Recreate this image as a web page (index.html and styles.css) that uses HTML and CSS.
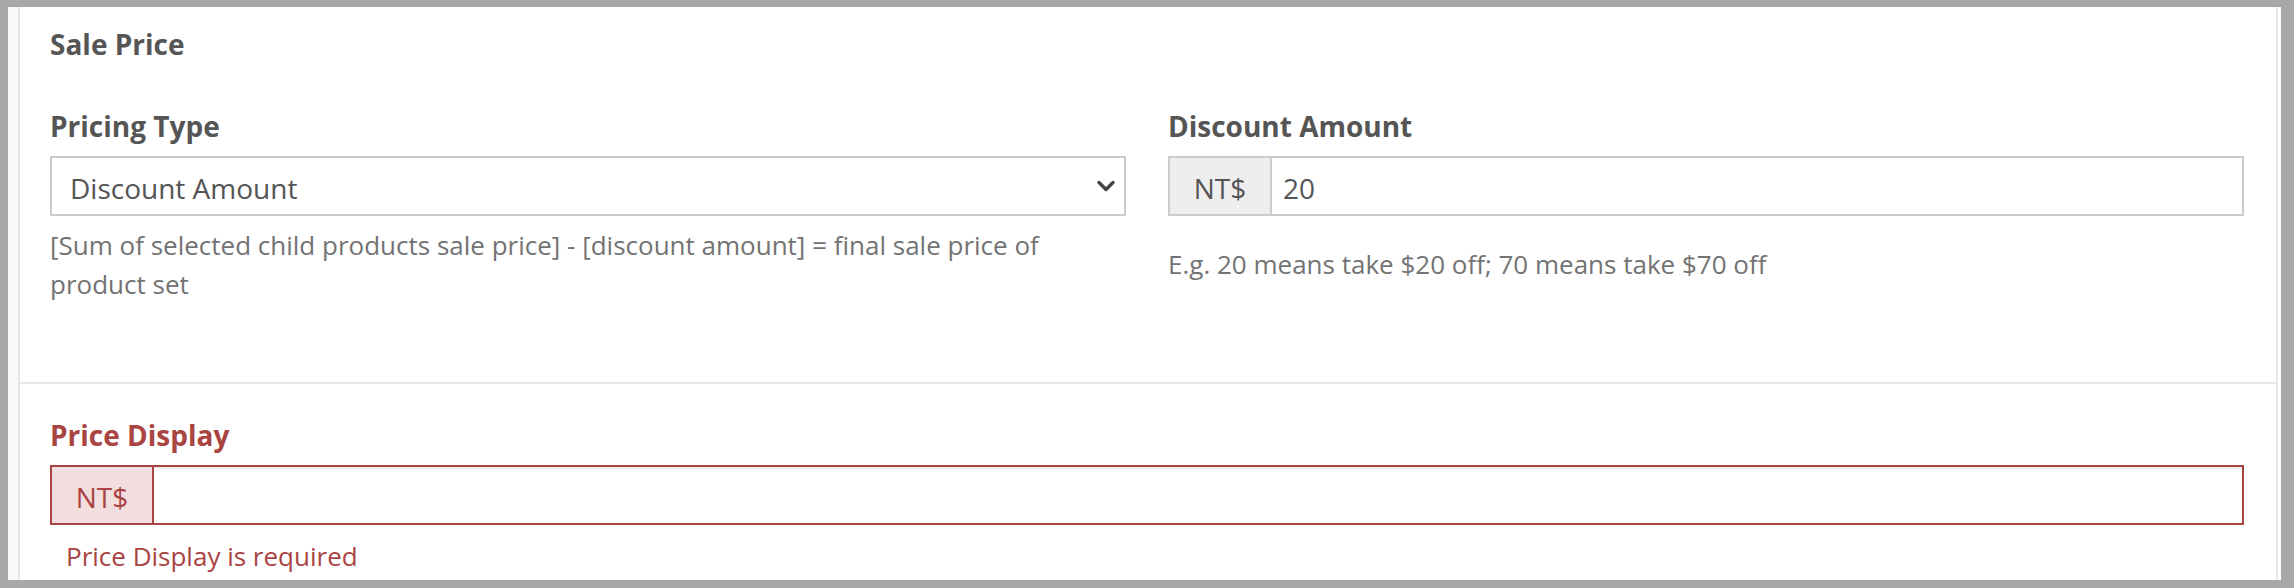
FILE: index.html
```html
<!DOCTYPE html>
<html lang="en">
<head>
<meta charset="utf-8">
<title>Sale Price</title>
<link rel="stylesheet" href="styles.css">
</head>
<body>
<div class="frame">
  <div class="shell">
    <div class="panel">
      <section class="sec sec-top">
        <h3 class="sec-title">Sale Price</h3>
        <div class="row">
          <div class="col">
            <label class="lbl">Pricing Type</label>
            <div class="select">
              <span class="select-text">Discount Amount</span>
              <svg class="chev" width="20" height="14" viewBox="0 0 20 14" aria-hidden="true"><path d="M3 3.5 L10 10.5 L17 3.5" fill="none" stroke="#444" stroke-width="3.4" stroke-linecap="round" stroke-linejoin="round"/></svg>
            </div>
            <p class="help">[Sum of selected child products sale price] - [discount amount] = final sale price of product set</p>
          </div>
          <div class="col">
            <label class="lbl">Discount Amount</label>
            <div class="igroup">
              <span class="addon">NT$</span>
              <span class="ival">20</span>
            </div>
            <p class="help help-r">E.g. 20 means take $20 off; 70 means take $70 off</p>
          </div>
        </div>
      </section>
      <section class="sec sec-bottom has-error">
        <label class="lbl">Price Display</label>
        <div class="igroup">
          <span class="addon">NT$</span>
          <span class="ival"></span>
        </div>
        <p class="err">Price Display is required</p>
      </section>
    </div>
  </div>
</div>
</body>
</html>
```

FILE: styles.css
```css
* { box-sizing: border-box; }
html, body { margin: 0; padding: 0; }
body {
  background: #a8a8a8;
  font-family: "Open Sans", "Noto Sans", "Liberation Sans", sans-serif;
  color: #555;
}
.frame {
  height: 588px;
  padding: 7px 13px 8px 8px;
  overflow: hidden;
}
.shell {
  height: 100%;
  background: #fff;
  border-left: 10px solid #f8f8f8;
  border-right: 3px solid #fff;
}
.panel {
  height: 100%;
  background: #fff;
  border-left: 2px solid #e6e6e6;
  border-right: 2px solid #e6e6e6;
}
.sec { padding-left: 30px; padding-right: 32px; }
.sec-top {
  padding-top: 17px;
  padding-bottom: 78px;
  border-bottom: 2px solid #e6e6e6;
}
.sec-title {
  margin: 0 0 42px 0;
  font-size: 28px;
  line-height: 40px;
  font-weight: 700;
  color: #555;
}
.row {
  display: grid;
  grid-template-columns: 1fr 1fr;
  column-gap: 42px;
}
.col { min-width: 0; }
.lbl {
  display: block;
  margin: 0 0 10px 0;
  font-size: 28px;
  line-height: 40px;
  font-weight: 700;
  color: #555;
}
.select {
  height: 60px;
  border: 2px solid #ccc;
  background: #fff;
  display: flex;
  align-items: center;
  justify-content: space-between;
  padding: 0 8px 0 18px;
  font-size: 28px;
  color: #555;
}
.select-text { padding-top: 4px; }
.chev { display: block; }
.help {
  margin: 10px 0 0 0;
  font-size: 26px;
  line-height: 39px;
  color: #737373;
}
.help-r { margin-top: 29px; }
.igroup {
  display: flex;
  height: 60px;
  border: 2px solid #ccc;
  background: #fff;
}
.addon {
  flex: 0 0 102px;
  display: flex;
  align-items: center;
  justify-content: center;
  padding-top: 4px;
  background: #eee;
  border-right: 2px solid #ccc;
  font-size: 28px;
  color: #555;
}
.ival {
  flex: 1;
  display: flex;
  align-items: center;
  padding-left: 11px;
  padding-top: 4px;
  font-size: 28px;
  color: #555;
}
.sec-bottom { padding-top: 31px; }
.has-error .lbl { color: #a94442; }
.has-error .igroup {
  border-color: #a94442;
  box-shadow: inset 0 2px 2px rgba(0,0,0,0.075);
}
.has-error .addon {
  flex-basis: 102px;
  background: #f2dede;
  border-right-color: #a94442;
  color: #a94442;
}
.err {
  margin: 11px 0 0 16px;
  font-size: 26px;
  line-height: 40px;
  color: #a94442;
}
```
